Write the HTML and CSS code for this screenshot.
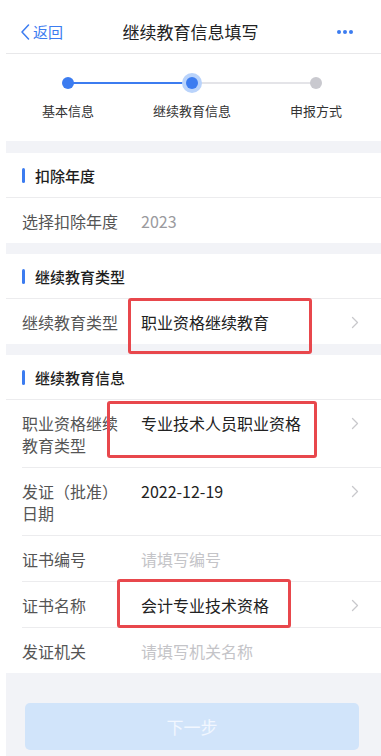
FILE: index.html
```html
<!DOCTYPE html>
<html lang="zh-CN">
<head>
<meta charset="utf-8">
<meta name="viewport" content="width=device-width, initial-scale=1">
<title>继续教育信息填写</title>
<link rel="stylesheet" href="styles.css">
</head>
<body>
<div class="page">
  <header class="nav">
    <a class="nav-back">
      <svg class="back-icon" width="10" height="16" viewBox="0 0 10 16"><polyline points="8.5,1 2,8 8.5,15" fill="none" stroke="#3c7cf0" stroke-width="1.5" stroke-linecap="round" stroke-linejoin="round"/></svg>
      <span>返回</span>
    </a>
    <h1 class="nav-title">继续教育信息填写</h1>
    <span class="nav-more">
      <svg width="18" height="6" viewBox="0 0 18 6"><circle cx="3" cy="3" r="2" fill="#3c7cf0"/><circle cx="9" cy="3" r="2" fill="#3c7cf0"/><circle cx="15" cy="3" r="2" fill="#3c7cf0"/></svg>
    </span>
  </header>

  <div class="steps">
    <div class="step step-done"><span class="dot"></span><span class="step-label">基本信息</span></div>
    <div class="step step-active"><span class="dot"></span><span class="step-label">继续教育信息</span></div>
    <div class="step step-todo"><span class="dot"></span><span class="step-label">申报方式</span></div>
  </div>

  <section class="section">
    <div class="section-head"><span class="bar"></span>扣除年度</div>
    <div class="row">
      <span class="label">选择扣除年度</span>
      <span class="value muted">2023</span>
    </div>
  </section>

  <section class="section">
    <div class="section-head"><span class="bar"></span>继续教育类型</div>
    <div class="row">
      <span class="label">继续教育类型</span>
      <span class="value">职业资格继续教育</span>
      <svg class="chev" width="8" height="13" viewBox="0 0 8 13"><polyline points="1.5,1.5 6.5,6.5 1.5,11.5" fill="none" stroke="#c8c8cc" stroke-width="1.3" stroke-linecap="round" stroke-linejoin="round"/></svg>
      <span class="mark mark-1"></span>
    </div>
  </section>

  <section class="section">
    <div class="section-head"><span class="bar"></span>继续教育信息</div>
    <div class="row">
      <span class="label">职业资格继续教育类型</span>
      <span class="value">专业技术人员职业资格</span>
      <svg class="chev" width="8" height="13" viewBox="0 0 8 13"><polyline points="1.5,1.5 6.5,6.5 1.5,11.5" fill="none" stroke="#c8c8cc" stroke-width="1.3" stroke-linecap="round" stroke-linejoin="round"/></svg>
      <span class="mark mark-2"></span>
    </div>
    <div class="row">
      <span class="label">发证（批准）日期</span>
      <span class="value">2022-12-19</span>
      <svg class="chev" width="8" height="13" viewBox="0 0 8 13"><polyline points="1.5,1.5 6.5,6.5 1.5,11.5" fill="none" stroke="#c8c8cc" stroke-width="1.3" stroke-linecap="round" stroke-linejoin="round"/></svg>
    </div>
    <div class="row">
      <span class="label">证书编号</span>
      <span class="value placeholder">请填写编号</span>
    </div>
    <div class="row">
      <span class="label">证书名称</span>
      <span class="value">会计专业技术资格</span>
      <svg class="chev" width="8" height="13" viewBox="0 0 8 13"><polyline points="1.5,1.5 6.5,6.5 1.5,11.5" fill="none" stroke="#c8c8cc" stroke-width="1.3" stroke-linecap="round" stroke-linejoin="round"/></svg>
      <span class="mark mark-3"></span>
    </div>
    <div class="row">
      <span class="label">发证机关</span>
      <span class="value placeholder">请填写机关名称</span>
    </div>
  </section>

  <footer class="footer">
    <button class="next-btn" type="button">下一步</button>
  </footer>
</div>
</body>
</html>
```

FILE: styles.css
```css
* { box-sizing: border-box; }
html, body { margin: 0; padding: 0; }
body {
  background: #ffffff;
  font-family: "Noto Sans CJK SC", "Noto Sans", sans-serif;
  color: #222;
}
.page {
  margin-left: 6px;
  width: 375px;
  min-height: 756px;
  background: #f2f3f7;
  display: flex;
  flex-direction: column;
}

/* nav */
.nav {
  height: 54px;
  padding-top: 10px;
  background: #fff;
  border-bottom: 1px solid #e8e8ea;
  display: grid;
  grid-template-columns: 90px 1fr 90px;
  align-items: center;
}
.nav-back {
  display: flex;
  align-items: center;
  padding-left: 14px;
  color: #3c7cf0;
  font-size: 15px;
  line-height: 20px;
}
.back-icon { margin-right: 3px; }
.nav-title {
  margin: 0;
  text-align: center;
  font-size: 17px;
  font-weight: 400;
  color: #222;
  line-height: 24px;
  margin-left: -6px;
}
.nav-more {
  display: flex;
  justify-content: flex-end;
  padding-right: 27px;
}
.nav-more svg { display: block; }

/* steps */
.steps {
  background: #fff;
  display: grid;
  grid-template-columns: repeat(3, 124px);
  padding-bottom: 21px;
  margin-bottom: 12px;
}
.step {
  position: relative;
  display: flex;
  flex-direction: column;
  align-items: center;
  padding-top: 23px;
}
.step::before, .step::after {
  content: "";
  position: absolute;
  top: 28px;
  height: 2px;
  background: #e4e4e8;
}
.step::before { left: 0; right: 50%; }
.step::after { left: 50%; right: 0; }
.step-done::before { display: none; }
.step-done::after { background: #3c7cf0; }
.step-active::before { background: #3c7cf0; }
.step-todo::after { display: none; }
.dot {
  position: relative;
  z-index: 1;
  width: 12px;
  height: 12px;
  border-radius: 50%;
  background: #3c7cf0;
}
.step-active .dot { box-shadow: 0 0 0 4px #b9d3fb; }
.step-todo .dot { background: #c9c9cf; }
.step-label {
  margin-top: 13px;
  font-size: 13px;
  line-height: 18px;
  color: #333;
}

/* sections */
.section {
  background: #fff;
  margin-bottom: 11px;
}
.section:last-of-type { margin-bottom: 0; }
.section-head {
  height: 45px;
  border-bottom: 1px solid #ececee;
  display: flex;
  align-items: center;
  padding-left: 16px;
  font-size: 15px;
  font-weight: 500;
  color: #1e1e1e;
}
.bar {
  width: 3px;
  height: 15px;
  border-radius: 2px;
  background: #3c7cf0;
  margin-right: 10px;
}
.row {
  position: relative;
  margin-left: 16px;
  padding: 11.5px 20px 11.5px 0;
  display: flex;
  align-items: flex-start;
  border-bottom: 1px solid #ececee;
  font-size: 16px;
  line-height: 22px;
}
.row:last-child { border-bottom: none; }
.label {
  width: 96px;
  flex: none;
  margin-right: 23px;
  color: #555;
}
.value {
  flex: 1;
  color: #222;
}
.value.muted { color: #9a9a9e; }
.value.placeholder { color: #c4c4c8; }
.chev {
  flex: none;
  margin-top: 5px;
  margin-right: 2px;
}

/* annotation boxes */
.mark {
  position: absolute;
  z-index: 2;
  border: 3px solid #e8474c;
  border-radius: 3px;
  pointer-events: none;
}
.mark-1 { left: 106px; top: -1px; width: 184px; height: 56px; }
.mark-2 { left: 85px; top: 1px; width: 210px; height: 57px; }
.mark-3 { left: 95px; top: -3px; width: 174px; height: 49px; }

/* footer */
.footer {
  flex: 1;
  padding: 30px 22px 6px 19px;
}
.next-btn {
  display: block;
  width: 334px;
  height: 47px;
  border: none;
  border-radius: 5px;
  background: #d1e4fa;
  color: #f2f7ff;
  font-family: "Noto Sans CJK SC", "Noto Sans", sans-serif;
  font-size: 17px;
}
```
